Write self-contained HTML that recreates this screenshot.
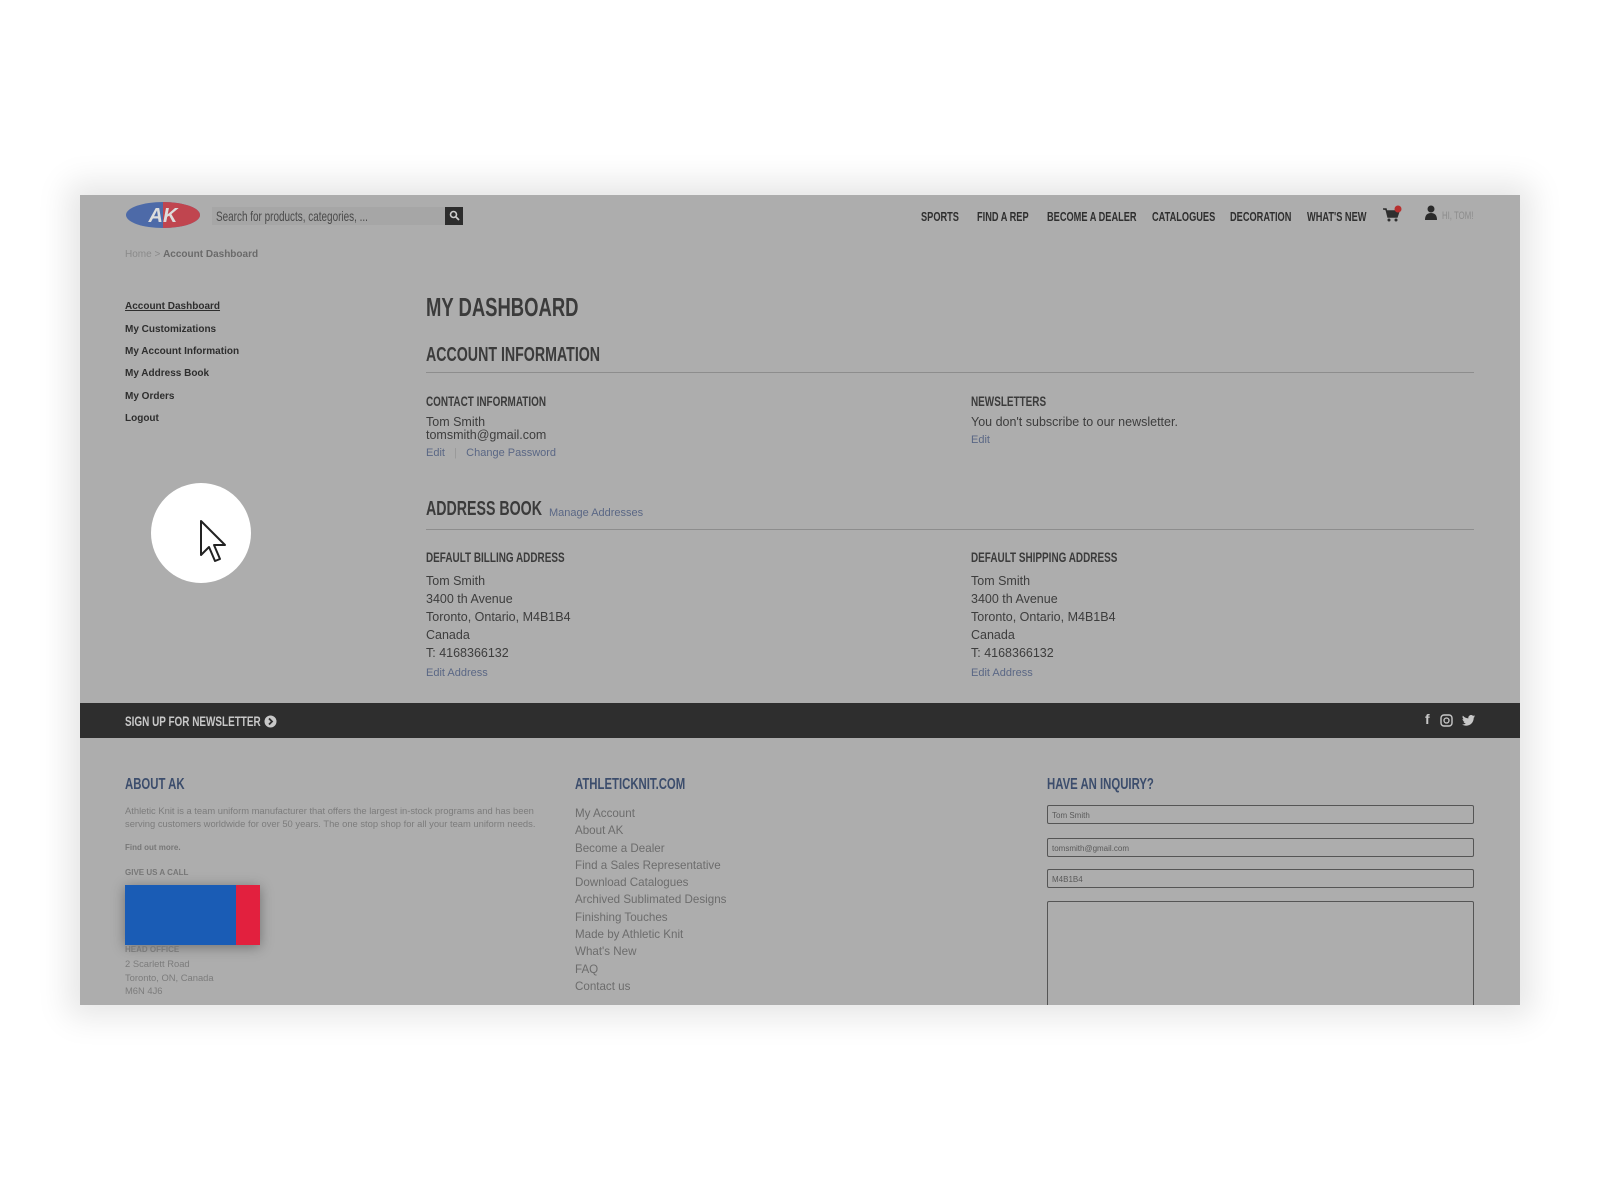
<!DOCTYPE html>
<html><head><meta charset="utf-8"><style>
*{margin:0;padding:0;box-sizing:border-box}
body{width:1600px;height:1200px;background:#fff;position:relative;overflow:hidden;font-family:"Liberation Sans",sans-serif;color:#3a3a3a}
.a{position:absolute;white-space:nowrap}
.panel{position:absolute;left:80px;top:195px;width:1440px;height:810px;background:#adadad;box-shadow:0 0 30px 12px rgba(0,0,0,0.10);overflow:hidden}
.n{font-family:"Liberation Sans",sans-serif;font-weight:bold;transform:scaleX(0.71);transform-origin:0 0}
.nav{font-size:13px;color:#2f2f2f;top:14px}
.sb{font-size:10px;font-weight:bold;color:#2e2e2e}
.t{font-size:12.5px;color:#3d3d3d}
.l{font-size:11px;color:#5a6785}
.fh{font-size:16px;color:#3c4d6c}
.fl{font-size:11.6px;color:#6c6c6c}
.inp{position:absolute;left:967px;width:427px;border:1px solid #555;border-radius:2px;font-size:8px;color:#5a5a5a;padding:5px 4px}
</style></head><body>
<div class="panel">
 <svg class="a" style="left:45px;top:6px" width="76" height="28" viewBox="0 0 76 28"><ellipse cx="38" cy="14" rx="37" ry="13" fill="#4d6aa8"/><path d="M38 1 A37 13 0 0 1 38 27 Z" fill="#c0454f"/><text x="38" y="21" text-anchor="middle" font-family="Liberation Sans" font-weight="bold" font-style="italic" font-size="20" fill="#ddd">AK</text></svg>
 <div class="a" style="left:132px;top:12px;width:250px;height:18px;background:#a6a6a6"></div>
 <div class="a n" style="left:136px;top:13px;font-size:14px;color:#4a4a4a;font-weight:normal">Search for products, categories, ...</div>
 <div class="a" style="left:365px;top:12px;width:18px;height:18px;background:#2d2d2d"></div>
 <svg class="a" style="left:369px;top:15px" width="11" height="11" viewBox="0 0 11 11"><circle cx="4.5" cy="4.5" r="3" stroke="#ccc" stroke-width="1.6" fill="none"/><path d="M7 7l3 3" stroke="#ccc" stroke-width="1.8"/></svg>
 <div class="a n nav" style="left:841px">SPORTS</div>
 <div class="a n nav" style="left:897px">FIND A REP</div>
 <div class="a n nav" style="left:967px">BECOME A DEALER</div>
 <div class="a n nav" style="left:1072px">CATALOGUES</div>
 <div class="a n nav" style="left:1150px">DECORATION</div>
 <div class="a n nav" style="left:1227px">WHAT'S NEW</div>
 <svg class="a" style="left:1302px;top:10px" width="20" height="20" viewBox="0 0 20 20"><path d="M1 4h3l2 8h9l2-6H5" fill="#2f2f2f" stroke="#2f2f2f" stroke-width="1.5"/><circle cx="7" cy="15" r="1.5" fill="#2f2f2f"/><circle cx="14" cy="15" r="1.5" fill="#2f2f2f"/><circle cx="16" cy="4" r="3.5" fill="#b8302f"/></svg>
 <svg class="a" style="left:1345px;top:10px" width="12" height="15" viewBox="0 0 12 15"><circle cx="6" cy="4" r="3.5" fill="#2b2b2b"/><path d="M0 15 Q0 8 6 8 Q12 8 12 15Z" fill="#2b2b2b"/></svg>
 <div class="a n" style="left:1362px;top:15px;font-size:11px;color:#8c8c8c;font-weight:normal">HI, TOM!</div>
 <div class="a" style="left:45px;top:54px;font-size:10px;color:#8a8a8a">Home &gt; <b style="color:#6a6a6a">Account Dashboard</b></div>
 <div class="a sb" style="left:45px;top:106px;text-decoration:underline">Account Dashboard</div>
 <div class="a sb" style="left:45px;top:129px">My Customizations</div>
 <div class="a sb" style="left:45px;top:151px">My Account Information</div>
 <div class="a sb" style="left:45px;top:173px">My Address Book</div>
 <div class="a sb" style="left:45px;top:196px">My Orders</div>
 <div class="a sb" style="left:45px;top:218px">Logout</div>
 <div class="a" style="left:71px;top:288px;width:100px;height:100px;border-radius:50%;background:#fff"></div>
 <svg class="a" style="left:119px;top:324px" width="28" height="44" viewBox="0 0 28 44"><path d="M2 2 L2 36 L10 28 L16 42 L21 40 L15 26 L26 26 Z" fill="#fff" stroke="#222" stroke-width="2" stroke-linejoin="round"/></svg>
 <div class="a n" style="left:346px;top:97px;font-size:26px;color:#3b3b3b">MY DASHBOARD</div>
 <div class="a n" style="left:346px;top:149px;font-size:20px;color:#3b3b3b">ACCOUNT INFORMATION</div>
 <div class="a" style="left:346px;top:177px;width:1048px;height:1px;background:#8d8d8d"></div>
 <div class="a n" style="left:346px;top:198px;font-size:14px;color:#3b3b3b">CONTACT INFORMATION</div>
 <div class="a t" style="left:346px;top:220px">Tom Smith</div>
 <div class="a t" style="left:346px;top:233px">tomsmith@gmail.com</div>
 <div class="a l" style="left:346px;top:252px">Edit &nbsp;&nbsp;<span style="color:#999">|</span>&nbsp;&nbsp; Change Password</div>
 <div class="a n" style="left:891px;top:198px;font-size:14px;color:#3b3b3b">NEWSLETTERS</div>
 <div class="a t" style="left:891px;top:220px">You don't subscribe to our newsletter.</div>
 <div class="a l" style="left:891px;top:239px">Edit</div>
 <div class="a n" style="left:346px;top:303px;font-size:20px;color:#3b3b3b">ADDRESS BOOK</div>
 <div class="a l" style="left:469px;top:312px">Manage Addresses</div>
 <div class="a" style="left:346px;top:334px;width:1048px;height:1px;background:#8d8d8d"></div>
 <div class="a n" style="left:346px;top:354px;font-size:14px;color:#3b3b3b">DEFAULT BILLING ADDRESS</div>
 <div class="a t" style="left:346px;top:377px;line-height:18px">Tom Smith<br>3400 th Avenue<br>Toronto, Ontario, M4B1B4<br>Canada<br>T: 4168366132</div>
 <div class="a l" style="left:346px;top:472px">Edit Address</div>
 <div class="a n" style="left:891px;top:354px;font-size:14px;color:#3b3b3b">DEFAULT SHIPPING ADDRESS</div>
 <div class="a t" style="left:891px;top:377px;line-height:18px">Tom Smith<br>3400 th Avenue<br>Toronto, Ontario, M4B1B4<br>Canada<br>T: 4168366132</div>
 <div class="a l" style="left:891px;top:472px">Edit Address</div>
 <div class="a" style="left:0;top:508px;width:1440px;height:35px;background:#2e2e2e"></div>
 <div class="a n" style="left:45px;top:518px;font-size:14px;color:#c8c8c8">SIGN UP FOR NEWSLETTER</div>
 <svg class="a" style="left:184px;top:520px" width="13" height="13" viewBox="0 0 13 13"><circle cx="6.5" cy="6.5" r="6" fill="#c8c8c8"/><path d="M5 3.5l3 3-3 3" stroke="#2e2e2e" stroke-width="1.8" fill="none"/></svg>
 <div class="a" style="left:1345px;top:516px;font-size:14px;color:#c8c8c8;font-weight:bold">f</div>
 <svg class="a" style="left:1360px;top:519px" width="13" height="13" viewBox="0 0 13 13"><rect x="1" y="1" width="11" height="11" rx="3" stroke="#c8c8c8" stroke-width="1.4" fill="none"/><circle cx="6.5" cy="6.5" r="2.5" stroke="#c8c8c8" stroke-width="1.3" fill="none"/></svg>
 <svg class="a" style="left:1382px;top:520px" width="13" height="11" viewBox="0 0 13 11"><path d="M13 1.3c-.5.2-1 .4-1.5.4.6-.3 1-.9 1.2-1.5-.5.3-1.1.5-1.7.7A2.7 2.7 0 0 0 6.4 3.4 7.6 7.6 0 0 1 .9.6a2.7 2.7 0 0 0 .8 3.6c-.4 0-.9-.1-1.2-.3 0 1.3.9 2.4 2.1 2.6-.4.1-.8.1-1.2 0 .3 1.1 1.3 1.8 2.5 1.9A5.4 5.4 0 0 1 0 9.5 7.6 7.6 0 0 0 4.1 10.7c4.9 0 7.6-4.1 7.6-7.6v-.3c.5-.4 1-.9 1.3-1.5z" fill="#c8c8c8"/></svg>
 <div class="a n fh" style="left:45px;top:581px">ABOUT AK</div>
 <div class="a" style="left:45px;top:609px;font-size:9.4px;color:#7c7c7c;line-height:13px">Athletic Knit is a team uniform manufacturer that offers the largest in-stock programs and has been<br>serving customers worldwide for over 50 years. The one stop shop for all your team uniform needs.</div>
 <div class="a" style="left:45px;top:648px;font-size:8px;color:#777;font-weight:bold">Find out more.</div>
 <div class="a" style="left:45px;top:673px;font-size:8px;color:#777;font-weight:bold">GIVE US A CALL</div>
 <div class="a" style="left:45px;top:690px;width:135px;height:60px;background:#1a5cb5;box-shadow:0 2px 12px rgba(0,0,0,.35)"></div>
 <div class="a" style="left:156px;top:690px;width:24px;height:60px;background:#e2203e"></div>
 <div class="a" style="left:45px;top:750px;font-size:8px;color:#7a7a7a;font-weight:bold">HEAD OFFICE</div>
 <div class="a" style="left:45px;top:762px;font-size:9.4px;color:#7c7c7c;line-height:13.5px">2 Scarlett Road<br>Toronto, ON, Canada<br>M6N 4J6</div>
 <div class="a n fh" style="left:495px;top:581px">ATHLETICKNIT.COM</div>
 <div class="a fl" style="left:495px;top:610px;line-height:17.3px">My Account<br>About AK<br>Become a Dealer<br>Find a Sales Representative<br>Download Catalogues<br>Archived Sublimated Designs<br>Finishing Touches<br>Made by Athletic Knit<br>What's New<br>FAQ<br>Contact us</div>
 <div class="a n fh" style="left:967px;top:581px">HAVE AN INQUIRY?</div>
 <div class="inp" style="top:610px;height:19px">Tom Smith</div>
 <div class="inp" style="top:643px;height:19px">tomsmith@gmail.com</div>
 <div class="inp" style="top:674px;height:19px">M4B1B4</div>
 <div class="inp" style="top:706px;height:120px"></div>
</div>
</body></html>
